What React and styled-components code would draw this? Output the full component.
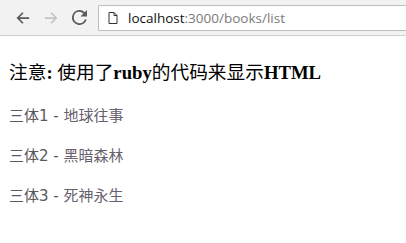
import React from "react";
import styled, { createGlobalStyle } from "styled-components";

const GlobalStyle = createGlobalStyle`
  html, body {
    margin: 0;
    padding: 0;
    background: #fff;
  }
`;

const Page = styled.div`
  width: 406px;
  height: 243px;
  overflow: hidden;
`;

const Toolbar = styled.div`
  display: flex;
  align-items: center;
  height: 36px;
  padding: 0 0 0 9px;
  background: #f2f2f2;
  border-bottom: 1px solid #cfcfcf;
  box-sizing: border-box;
`;

const NavButton = styled.div`
  width: 28px;
  height: 28px;
  display: flex;
  align-items: center;
  justify-content: center;
  color: ${(p) => (p.$disabled ? "#c4c4c4" : "#5a5a5a")};
`;

const AddressBar = styled.div`
  flex: 1;
  display: flex;
  align-items: center;
  gap: 10px;
  height: 26px;
  margin-left: 5px;
  padding-left: 9px;
  background: #fff;
  border: 1px solid #bdbdbd;
  border-right: none;
  border-radius: 2px 0 0 2px;
  box-sizing: border-box;
  font-family: "Open Sans", "Noto Sans", sans-serif;
  font-size: 13.5px;
`;

const Host = styled.span`
  color: #111;
`;

const Path = styled.span`
  color: #7a7a7a;
`;

const Content = styled.div`
  padding: 0 9px;
`;

const Heading = styled.h3`
  margin: 24px 0 21px;
  font-family: "Liberation Serif", "Noto Sans CJK SC", serif;
  font-size: 18.7px;
  font-weight: bold;
  color: #000;
  line-height: 22px;
`;

const Cjk = styled.span`
  font-family: "Noto Sans CJK SC", sans-serif;
  font-weight: normal;
`;

const Item = styled.p`
  margin: 0 0 18px;
  font-family: "DejaVu Sans", "Noto Sans CJK SC", sans-serif;
  font-size: 15px;
  line-height: 22px;
  color: #595959;
`;

const Title = styled.span`
  color: #67606d;
`;

const books = [
  { n: 1, title: "地球往事" },
  { n: 2, title: "黑暗森林" },
  { n: 3, title: "死神永生" },
];

function BackIcon() {
  return (
    <svg width="14" height="14" viewBox="0 0 16 16" fill="none" stroke="currentColor" strokeWidth="2">
      <path d="M15 8H2M8 2L2 8l6 6" />
    </svg>
  );
}

function ForwardIcon() {
  return (
    <svg width="14" height="14" viewBox="0 0 16 16" fill="none" stroke="currentColor" strokeWidth="2">
      <path d="M1 8h13M8 2l6 6-6 6" />
    </svg>
  );
}

function ReloadIcon() {
  return (
    <svg width="15" height="15" viewBox="0 0 16 16">
      <path
        d="M13.6 2.4A7.9 7.9 0 0 0 8 0a8 8 0 1 0 7.7 10h-2.1A6 6 0 1 1 8 2c1.66 0 3.14.69 4.22 1.78L9 7h7V0l-2.4 2.4z"
        fill="currentColor"
      />
    </svg>
  );
}

function PageIcon() {
  return (
    <svg width="10" height="12" viewBox="0 0 10 12" fill="none" stroke="#333" strokeWidth="1">
      <path d="M1 0.5h5l3 3v8H1z M6 0.5v3h3" />
    </svg>
  );
}

export default function App() {
  return (
    <Page>
      <GlobalStyle />
      <Toolbar>
        <NavButton>
          <BackIcon />
        </NavButton>
        <NavButton $disabled>
          <ForwardIcon />
        </NavButton>
        <NavButton>
          <ReloadIcon />
        </NavButton>
        <AddressBar>
          <PageIcon />
          <span>
            <Host>localhost</Host>
            <Path>:3000/books/list</Path>
          </span>
        </AddressBar>
      </Toolbar>
      <Content>
        <Heading>
          <Cjk>注意</Cjk>: <Cjk>使用了</Cjk>ruby<Cjk>的代码来显示</Cjk>HTML
        </Heading>
        {books.map((b) => (
          <Item key={b.n}>
            三体{b.n} - <Title>{b.title}</Title>
          </Item>
        ))}
      </Content>
    </Page>
  );
}
